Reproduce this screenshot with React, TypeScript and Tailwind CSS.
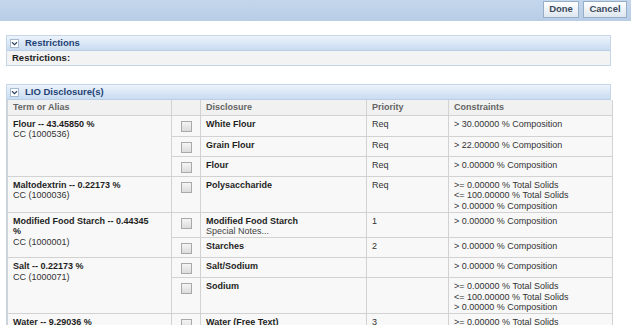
import React from "react"

const cellTxt = "text-[9px] leading-[10.67px] text-[#1e1e1e]"

const Check = () => (
  <div className="mx-auto mt-[5px] h-[11px] w-[11px] border border-[#a9a9a9] bg-gradient-to-b from-[#f4f4f4] to-[#dcdcdc]" />
)

const Toggle = () => (
  <span className="flex h-[9px] w-[9px] items-center justify-center border border-[#a6bad2] bg-white">
    <svg width="7" height="5" viewBox="0 0 7 5">
      <path d="M1 1.2 L3.5 3.6 L6 1.2" fill="none" stroke="#2d4464" strokeWidth="1.2" />
    </svg>
  </span>
)

const PanelHeader = ({ title }: { title: string }) => (
  <div className="flex h-[15px] items-center gap-[6px] border-b border-[#b9cfe6] bg-gradient-to-b from-[#ecf3fb] to-[#c9dcf1] pl-[3px]">
    <Toggle />
    <span className="text-[9.5px] font-bold text-[#1f4275]">{title}</span>
  </div>
)

const Term = ({ name, code }: { name: React.ReactNode; code: string }) => (
  <div className="px-[5px] pt-[3px]">
    <div className={`${cellTxt} font-bold`}>{name}</div>
    <div className={`${cellTxt} text-[#333]`}>{code}</div>
  </div>
)

const Lines = ({ lines }: { lines: string[] }) => (
  <div className="px-[5px] pt-[3px]">
    {lines.map((l, i) => (
      <div key={i} className={`${cellTxt} text-[#333]`}>
        {l}
      </div>
    ))}
  </div>
)

const td = "border border-[#d2d2d2] align-top p-0"
const th = "border border-[#d2d2d2] border-t-0 px-[5px] py-0 leading-[14px]"

type Row = {
  h: number
  term?: { name: React.ReactNode; code: string; span: number }
  disc: string
  note?: string
  prio: string
  cons: string[]
}

const solids = [">= 0.00000 % Total Solids", "<= 100.00000 % Total Solids", "> 0.00000 % Composition"]

const rows: Row[] = [
  { h: 21, term: { name: "Flour -- 43.45850 %", code: "CC (1000536)", span: 3 }, disc: "White Flour", prio: "Req", cons: ["> 30.00000 % Composition"] },
  { h: 20, disc: "Grain Flour", prio: "Req", cons: ["> 22.00000 % Composition"] },
  { h: 20, disc: "Flour", prio: "Req", cons: ["> 0.00000 % Composition"] },
  {
    h: 36,
    term: { name: "Maltodextrin -- 0.22173 %", code: "CC (1000036)", span: 1 },
    disc: "Polysaccharide",
    prio: "Req",
    cons: solids,
  },
  {
    h: 24,
    term: {
      name: (
        <>
          Modified Food Starch -- 0.44345
          <br />%
        </>
      ),
      code: "CC (1000001)",
      span: 2,
    },
    disc: "Modified Food Starch",
    note: "Special Notes...",
    prio: "1",
    cons: ["> 0.00000 % Composition"],
  },
  { h: 20, disc: "Starches", prio: "2", cons: ["> 0.00000 % Composition"] },
  { h: 20, term: { name: "Salt -- 0.22173 %", code: "CC (1000071)", span: 2 }, disc: "Salt/Sodium", prio: "", cons: ["> 0.00000 % Composition"] },
  { h: 35, disc: "Sodium", prio: "", cons: solids },
  {
    h: 36,
    term: { name: "Water -- 9.29036 %", code: "", span: 1 },
    disc: "Water (Free Text)",
    prio: "3",
    cons: solids,
  },
]

export default function App() {
  return (
    <div className="h-[325px] w-[631px] overflow-hidden bg-white font-['Liberation_Sans',Arial,sans-serif]">
      <div className="flex h-[21px] items-start justify-end gap-[4px] bg-gradient-to-b from-[#c3d6ec] to-[#b8cde6] pr-[4px] pt-[1px]">
        <button className="h-[17px] w-[36px] border border-[#97aec8] bg-gradient-to-b from-white to-[#dde6ef] text-[9.5px] font-bold text-[#3a4a5c]">
          Done
        </button>
        <button className="h-[17px] w-[44px] border border-[#97aec8] bg-gradient-to-b from-white to-[#dde6ef] text-[9.5px] font-bold text-[#3a4a5c]">
          Cancel
        </button>
      </div>

      <div className="ml-[6px] mt-[14px] w-[605px] border border-[#c6d6e8]">
        <PanelHeader title="Restrictions" />
        <div className="flex h-[14px] items-center bg-[#f3f3f3] pl-[5px] text-[9.5px] font-bold text-[#1e1e1e]">
          Restrictions:
        </div>
      </div>

      <div className="ml-[6px] mt-[18px] w-[605px] border-x border-t border-[#c6d6e8]">
        <PanelHeader title="LIO Disclosure(s)" />
        <table className="w-[605px] table-fixed border-collapse bg-[#f8f8f8]">
          <colgroup>
            <col className="w-[164px]" />
            <col className="w-[29px]" />
            <col className="w-[166px]" />
            <col className="w-[82px]" />
            <col className="w-[164px]" />
          </colgroup>
          <thead>
            <tr className="bg-[#f1f1f1] text-left text-[9px] font-bold text-[#646464]" style={{ height: 15 }}>
              <th className={th}>Term or Alias</th>
              <th className={th} />
              <th className={th}>Disclosure</th>
              <th className={th}>Priority</th>
              <th className={th}>Constraints</th>
            </tr>
          </thead>
          <tbody>
            {rows.map((r, i) => (
              <tr key={i} style={{ height: r.h }}>
                {r.term && (
                  <td rowSpan={r.term.span} className={td}>
                    <Term name={r.term.name} code={r.term.code} />
                  </td>
                )}
                <td className={td}>
                  <Check />
                </td>
                <td className={td}>
                  <div className="px-[5px] pt-[3px]">
                    <div className={`${cellTxt} font-bold`}>{r.disc}</div>
                    {r.note && <div className={`${cellTxt} text-[#444]`}>{r.note}</div>}
                  </div>
                </td>
                <td className={td}>
                  <Lines lines={r.prio ? [r.prio] : []} />
                </td>
                <td className={td}>
                  <Lines lines={r.cons} />
                </td>
              </tr>
            ))}
          </tbody>
        </table>
      </div>
    </div>
  )
}
